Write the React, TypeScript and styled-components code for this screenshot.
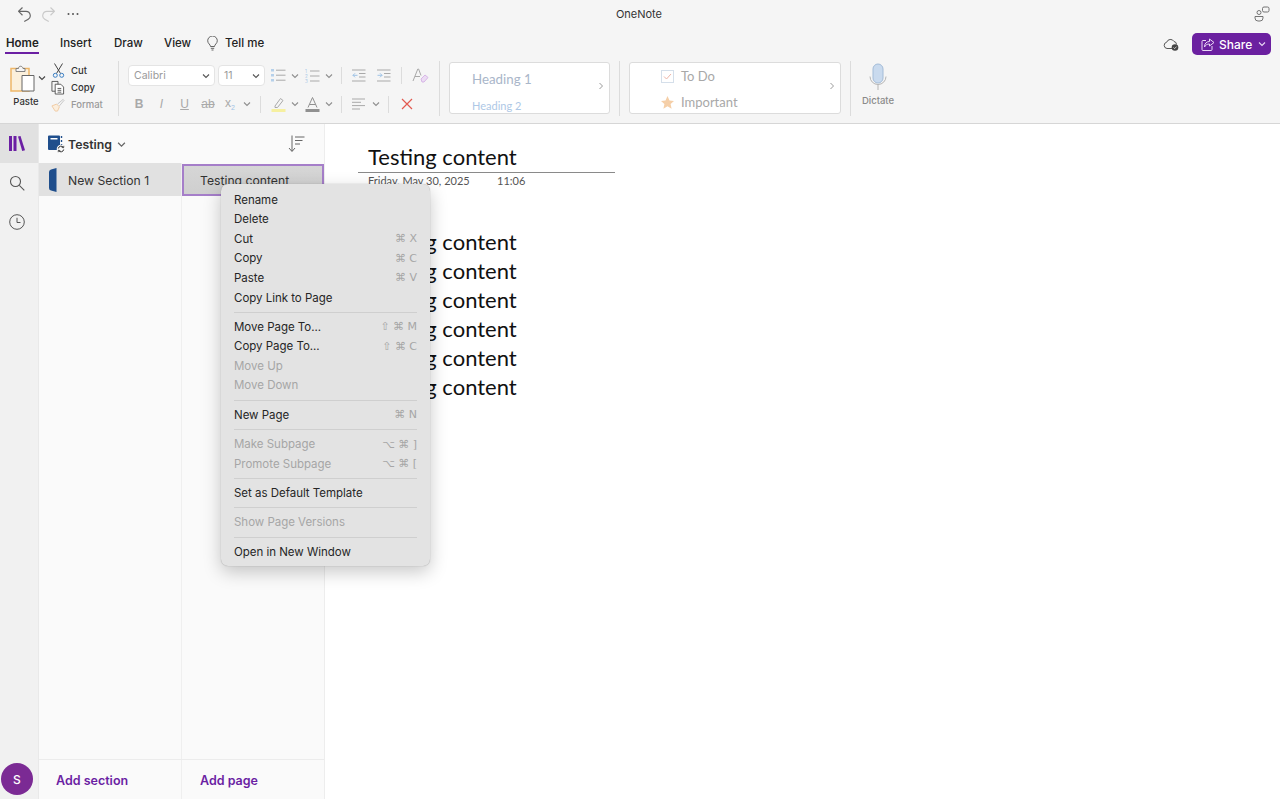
import React from "react";
import styled, { createGlobalStyle } from "styled-components";

const Global = createGlobalStyle`
  html, body { margin: 0; padding: 0; height: 100%; overflow: hidden; }
  #root { height: 100%; }
  * { box-sizing: border-box; }
  body { font-family: Inter, "Liberation Sans", sans-serif; color: #222; background: #fff; -webkit-font-smoothing: antialiased; }
`;

const Page = styled.div`position: relative; width: 1280px; height: 799px; display: flex; flex-direction: column; overflow: hidden;`;
const Header = styled.header`height: 124px; flex: none; background: #f5f5f5; border-bottom: 1px solid #d6d6d6; display: flex; flex-direction: column;`;
const TitleBar = styled.div`height: 30px; flex: none; display: flex; align-items: center; padding: 0 10px 2px 18px; position: relative;`;
const QuickIcons = styled.div`display: flex; align-items: center; gap: 11px; flex: 1;`;
const AppName = styled.div`font-size: 11px; color: #333; flex: none; margin-right: 592px;`;
const TabBar = styled.nav`height: 25px; flex: none; display: flex; align-items: center; padding: 1px 9px 0 6px;`;
const Tab = styled.div<{ $active?: boolean; $w: number }>`
  width: ${p => p.$w}px; height: 25px; font-size: 11.5px; line-height: 25px; font-weight: 500; color: #222; position: relative; white-space: nowrap;
  ${p => p.$active ? `font-weight: 600; line-height: 24px; &::after { content: ""; position: absolute; left: -1px; top: 21px; width: 34px; height: 2px; background: #6b1fa3; }` : ""}
`;
const TellMe = styled.div`display: flex; align-items: center; gap: 6px; font-size: 11.5px; font-weight: 500; flex: 1; height: 25px;`;
const CloudSlot = styled.div`display: flex; margin-right: 13px; margin-top: 3px;`;
const ShareButton = styled.div`
  width: 79px; height: 22px; background: #6b20a0; color: #fff; border-radius: 5px; display: flex; align-items: center; gap: 4px;
  padding-left: 9px; font-size: 12px; font-weight: 500; margin-top: 2px;
`;
const Ribbon = styled.div`flex: 1; display: flex; align-items: flex-start; padding: 6px 0 0 5px;`;
const VSep = styled.div<{ $h?: number; $ml?: number; $mr?: number }>`
  width: 1px; height: ${p => p.$h ?? 55}px; background: #dcdcdc; flex: none; margin: 0 ${p => p.$mr ?? 9}px 0 ${p => p.$ml ?? 9}px;
`;
const PasteGroup = styled.div`display: flex; width: 104px; height: 55px; flex: none;`;
const PasteCol = styled.div`width: 36px; display: flex; flex-direction: column; align-items: center; padding-top: 4px; flex: none; position: relative;`;
const PasteLabel = styled.div`font-size: 9.5px; font-weight: 500; color: #333; margin-top: 3px; margin-left: 6px;`;
const ClipList = styled.div`display: flex; flex-direction: column; padding-top: 1px; margin-left: 10px;`;
const ClipRow = styled.div<{ $dim?: boolean }>`
  display: flex; align-items: center; gap: 6px; height: 17px; font-size: 9.5px; font-weight: 500; color: ${p => p.$dim ? "#9a9a9a" : "#333"};
`;
const ClipIcon = styled.span`width: 14px; display: flex; justify-content: center;`;
const FontGroup = styled.div`display: flex; flex-direction: column; width: 311px; flex: none;`;
const ToolRow = styled.div<{ $h: number }>`display: flex; align-items: center; height: ${p => p.$h}px;`;
const SelectBox = styled.div<{ $w: number }>`
  width: ${p => p.$w}px; height: 21px; background: #fff; border: 1px solid #e4e4e4; border-radius: 4px; margin-right: 3px; flex: none;
  display: flex; align-items: center; justify-content: space-between; padding: 0 4px 0 5px; font-size: 10.5px; color: #9a9a9a;
`;
const Tool = styled.div<{ $w: number }>`width: ${p => p.$w}px; height: 22px; flex: none; display: flex; align-items: center; justify-content: center;`;
const StyleSep = styled.div`width: 1px; height: 55px; background: #dcdcdc; flex: none;`;
const StyleBox = styled.div<{ $w: number }>`
  width: ${p => p.$w}px; height: 52px; margin: 1px 9px 0; flex: none; background: #fff; border: 1px solid #dcdcdc; border-radius: 3px; position: relative; overflow: hidden;
  font-family: Lato, "Open Sans", sans-serif;
`;
const Caret = styled.span`position: absolute; right: 5px; top: 19px; display: flex;`;
const Heading = styled.div<{ $size: number; $color: string; $top: number }>`
  position: absolute; left: 22px; top: ${p => p.$top}px; font-size: ${p => p.$size}px; color: ${p => p.$color}; line-height: 1;
`;
const TagRow = styled.div<{ $top: number }>`
  position: absolute; left: 31px; top: ${p => p.$top}px; display: flex; align-items: center; gap: 7px; font-size: 13px; color: #a8a8a8; line-height: 16px;
`;
const DictateBlock = styled.div`width: 54px; display: flex; flex-direction: column; align-items: center; padding-top: 2px; font-size: 9.5px; color: #8a8a8a; font-weight: 500; gap: 4px;`;
const Body = styled.main`flex: 1; display: flex; min-height: 0;`;
const Rail = styled.aside`width: 39px; flex: none; background: #f1f1f1; border-right: 1px solid #e9e9e9; display: flex; flex-direction: column; align-items: center; position: relative;`;
const RailItem = styled.div<{ $active?: boolean }>`
  width: 38px; height: 39px; padding-right: 4px; display: flex; align-items: center; justify-content: center; background: ${p => p.$active ? "#e1e1e1" : "transparent"};
`;
const Avatar = styled.div`
  position: absolute; left: 1px; bottom: 4px; width: 32px; height: 32px; border-radius: 50%; background: #7b2a94; color: #fff; display: flex; align-items: center; justify-content: center; font-size: 12px; font-weight: 500;
`;
const Panels = styled.div`width: 286px; flex: none; background: #fafafa; border-right: 1px solid #ededed; display: flex; flex-direction: column;`;
const NotebookBar = styled.div`height: 39px; flex: none; display: flex; align-items: center; padding: 1px 19px 0 8px; font-size: 12.3px; font-weight: 600; color: #333;`;
const NotebookName = styled.span`margin: 0 5px 0 2px;`;
const Grow = styled.div`flex: 1;`;
const Columns = styled.div`flex: 1; display: flex; min-height: 0;`;
const Column = styled.div<{ $w: number; $line?: boolean }>`width: ${p => p.$w}px; flex: none; ${p => p.$line ? "border-right: 1px solid #efefef;" : ""}`;
const SectionRow = styled.div`height: 33px; background: #e1e1e1; display: flex; align-items: center; padding: 1px 0 0 10px; gap: 11px; font-size: 12.2px; color: #333;`;
const PageRow = styled.div`height: 32px; border: 2px solid #a57ec9; display: flex; align-items: center; padding-left: 16px; font-size: 12.2px; color: #333; margin-top: 1px; background: linear-gradient(#d6d6d6, #cfcfcf);`;
const FooterRow = styled.div`height: 40px; flex: none; display: flex; border-top: 1px solid #ececec;`;
const AddLink = styled.div<{ $w: number; $line?: boolean; $pl: number }>`
  width: ${p => p.$w}px; padding: 1px 0 0 ${p => p.$pl}px; font-size: 12.5px; font-weight: 600; color: #6b1fa3; display: flex; align-items: center; ${p => p.$line ? "border-right: 1px solid #efefef;" : ""}
`;
const Canvas = styled.section`flex: 1; background: #fff; padding: 19px 0 0 33px; font-family: Lato, "Open Sans", sans-serif; color: #111;`;
const TitleBlock = styled.div`width: 257px; height: 30px; padding-left: 10px; border-bottom: 1px solid #8a8a8a; font-size: 22px; line-height: 28px;`;
const Meta = styled.div`display: flex; padding: 1px 0 0 10px; font-size: 11px; line-height: 14px; color: #555;`;
const MetaDate = styled.span`width: 129px;`;
const NoteLines = styled.div`margin-top: 39px; padding-left: 10px;`;
const NoteLine = styled.div`font-size: 22px; line-height: 29px; height: 29px;`;
const Menu = styled.div`
  position: absolute; left: 221px; top: 184px; width: 209px; height: 382px; background: #e3e3e3; border-radius: 7px; padding: 6px 13px 0;
  box-shadow: 0 0 1px rgba(0,0,0,.35), 0 6px 18px rgba(0,0,0,.22); z-index: 5;
`;
const MenuItem = styled.div<{ $off?: boolean }>`
  height: 19.55px; display: flex; justify-content: space-between; align-items: center; font-size: 11.5px; letter-spacing: -0.02px; white-space: nowrap;
  color: ${p => p.$off ? "#a6a6a6" : "#262626"};
`;
const Keys = styled.span`color: #a6a6a6; font-size: 11px; font-family: "DejaVu Sans", sans-serif;`;
const MenuSep = styled.div`height: 1px; background: #cfcfcf; margin: 4.4px 0;`;

const Chev = ({ c = "#8f8f8f", s = 8 }: { c?: string; s?: number }) => (
  <svg width={s} height={s} viewBox="0 0 8 8" fill="none"><path d="M1 2.5 4 5.5 7 2.5" stroke={c} strokeWidth="1.1" /></svg>
);
const Line = "#a9a9a9";

const UndoIcon = ({ c }: { c: string }) => (
  <svg width="13" height="15" viewBox="1.500 1 12.500 14.500" fill="none" stroke={c} strokeWidth="1.100"><path d="M5.800 1.500 2 5.200 5.800 9M2 5.200h7.300a4.200 4.200 0 0 1 1.600 8L7.500 15" /></svg>
);
const RedoIcon = ({ c }: { c: string }) => (
  <svg width="13" height="15" viewBox="2 1 12.500 14.500" fill="none" stroke={c} strokeWidth="1.100"><path d="M10.200 1.500 14 5.200 10.200 9M14 5.200H6.700a4.200 4.200 0 0 0-1.600 8L8.500 15" /></svg>
);
const BulletsIcon = () => (
  <svg width="15" height="13" viewBox="0 0 15 13"><g fill="#b5d0ea"><rect y="0" width="3" height="2.5"/><rect y="5" width="3" height="2.5"/><rect y="10" width="3" height="2.5"/></g><path d="M5 1.2h9.5M5 6.2h9.5M5 11.2h9.5" stroke={Line} /></svg>
);
const NumbersIcon = () => (
  <svg width="15" height="14" viewBox="0 0 15 14"><text x="0" y="4" fontSize="4.5" fill="#a9c8e6" fontFamily="Inter">1</text><text x="0" y="9" fontSize="4.5" fill="#a9c8e6" fontFamily="Inter">2</text><text x="0" y="14" fontSize="4.5" fill="#a9c8e6" fontFamily="Inter">3</text><path d="M5 2h9.5M5 7h9.5M5 12h9.5" stroke={Line} /></svg>
);
const OutdentIcon = () => (
  <svg width="14" height="13" viewBox="0 0 14 13" fill="none"><path d="M0 1h13.5M7 4.5h6.5M7 8h6.5M0 12h13.5" stroke={Line} /><path d="M5.5 6.3H.8M3 4.3l-2 2 2 2" stroke="#9fc3e6" /></svg>
);
const IndentIcon = () => (
  <svg width="14" height="13" viewBox="0 0 14 13" fill="none"><path d="M0 1h13.5M7 4.5h6.5M7 8h6.5M0 12h13.5" stroke={Line} /><path d="M.5 6.3h4.7M3 4.3l2 2-2 2" stroke="#9fc3e6" /></svg>
);
const ClearFmtIcon = () => (
  <svg width="17" height="16" viewBox="0 0 17 16" fill="none"><path d="M1 13 5.8 1h.8L9 7.5M3 8.5h5" stroke="#a9a9a9" /><path d="m9 11 4-4 3 2.500-4 4.500H10z" stroke="#d7b6e6" fill="#ecdcf4" /></svg>
);
const HighlightIcon = () => (
  <svg width="15" height="15" viewBox="0 0 15 15" fill="none"><path d="m4 9 5.500-7.500 2.500 2L6.500 10.500H4z" stroke="#a9a9a9" /><rect x="0.500" y="12" width="14" height="3" fill="#f6f0a0" /></svg>
);
const FontColorIcon = () => (
  <svg width="15" height="15" viewBox="0 0 15 15" fill="none"><path d="M3 10.500 7.500 0.500 12 10.500M4.500 7.500h6" stroke="#8f8f8f" /><rect x="0.500" y="12" width="14" height="3" fill="#909090" /></svg>
);
const AlignIcon = () => (
  <svg width="14" height="12" viewBox="0 0 14 12" fill="none"><path d="M0 1h13M0 4.300h9M0 7.600h13M0 11h8" stroke={Line} /></svg>
);

const PasteIcon = () => (
  <svg width="26" height="28" viewBox="0 0 26 28" fill="none">
    <path d="M1 3.500h18v22.500H1z" fill="#fbf0dc" stroke="#eeb668" strokeWidth="1.500" />
    <path d="M6 3.500h2.500c0-3 4-3 4.500 0H15v3H6z" fill="#f5f5f5" stroke="#777" strokeWidth="0.900" />
    <path d="M12 10.500h12v15.500H12z" fill="#fff" stroke="#666" />
  </svg>
);
const ScissorsIcon = () => (
  <svg width="13" height="15" viewBox="0 0 13 15" fill="none"><path d="M2.500 0.500 8.500 10.500M10.500 0.500 4.500 10.500" stroke="#444" /><circle cx="3.300" cy="12.300" r="2" stroke="#3a7fc4" /><circle cx="9.700" cy="12.300" r="2" stroke="#3a7fc4" /></svg>
);
const CopyIcon = () => (
  <svg width="15" height="15" viewBox="0 0 15 15" fill="none" stroke="#444" strokeWidth="0.900"><path d="M1 1h6.500v10.500H1z" fill="#f5f5f5" /><path d="M4.500 4h6l3 3v7.500h-9z" fill="#fff" /><path d="M7 8.500h4M7 10.500h4M7 12.500h4" /></svg>
);
const BrushIcon = () => (
  <svg width="15" height="14" viewBox="0 0 15 14" fill="none"><path d="m1 8 5-2 3 3-2 4.500H4.500L1 8Z" stroke="#f0c9a0" fill="#fbeedd" /><path d="m7 6 6-5 1 1-5 6" stroke="#c5c5c5" /></svg>
);
const NotebookIcon = () => (
  <svg width="19" height="18" viewBox="0 0 19 18" fill="none">
    <path d="M1 1.500a1 1 0 0 1 1-1h10a1 1 0 0 1 1 1v13.500H2a1 1 0 0 1-1-1z" fill="#1f4e8c" />
    <rect x="3.500" y="3" width="7" height="1.500" fill="#fff" />
    <path d="M14.500 1v2M14.500 5v2M14.500 9v2" stroke="#1f4e8c" strokeWidth="1.400" />
    <circle cx="14" cy="14" r="4.300" fill="#fafafa" />
    <path d="M11.300 13.500a2.800 2.800 0 0 1 5-1.200M16.700 14.500a2.800 2.800 0 0 1-5 1.200" stroke="#333" strokeWidth="1" />
    <path d="m16.800 10.800-.2 2-1.900-.4M11.200 17.200l.2-2 1.900.4" stroke="#333" strokeWidth="0.800" />
  </svg>
);

const menu: (null | { t: string; k?: string; off?: boolean })[] = [
  { t: "Rename" }, { t: "Delete" }, { t: "Cut", k: "⌘ X" }, { t: "Copy", k: "⌘ C" }, { t: "Paste", k: "⌘ V" }, { t: "Copy Link to Page" }, null,
  { t: "Move Page To...", k: "⇧ ⌘ M" }, { t: "Copy Page To...", k: "⇧ ⌘ C" }, { t: "Move Up", off: true }, { t: "Move Down", off: true }, null,
  { t: "New Page", k: "⌘ N" }, null,
  { t: "Make Subpage", k: "⌥ ⌘ ]", off: true }, { t: "Promote Subpage", k: "⌥ ⌘ [", off: true }, null,
  { t: "Set as Default Template" }, null,
  { t: "Show Page Versions", off: true }, null,
  { t: "Open in New Window" },
];

const ToolGlyph = styled.span<{ $b?: boolean; $i?: boolean; $u?: boolean; $s?: boolean }>`
  font-size: 12px; color: #a9a9a9; font-family: "Liberation Sans", sans-serif;
  font-weight: ${p => p.$b ? 700 : 400}; font-style: ${p => p.$i ? "italic" : "normal"};
  text-decoration: ${p => p.$u ? "underline" : p.$s ? "line-through" : "none"};
`;
const Sub = styled.sub`font-size: 7px; color: #9fc3e6;`;
const PasteCaret = styled.span`position: absolute; left: 33px; top: 13px; display: flex;`;
const ShareCaret = styled.span`display: flex; margin-left: 2px;`;
const Dots = styled.svg`margin-left: 1px;`;

export default function App() {
  return (
    <Page>
      <Global />
      <Header>
        <TitleBar>
          <QuickIcons>
            <UndoIcon c="#666" />
            <RedoIcon c="#c9c9c9" />
            <Dots width="12" height="4" viewBox="0 0 12 4" fill="#555"><circle cx="1.500" cy="2" r="1" /><circle cx="6" cy="2" r="1" /><circle cx="10.500" cy="2" r="1" /></Dots>
          </QuickIcons>
          <AppName>OneNote</AppName>
          <svg width="16" height="16" viewBox="0 0 16 16" fill="none" stroke="#666" strokeWidth="0.900"><rect x="8.500" y="1" width="6.500" height="5" rx="1.500" /><circle cx="5" cy="6.500" r="2" /><path d="M1 10.500h8v1.500a3 3 0 0 1-3 3H4a3 3 0 0 1-3-3z" /></svg>
        </TitleBar>
        <TabBar>
          <Tab $active $w={54}>Home</Tab>
          <Tab $w={54}>Insert</Tab>
          <Tab $w={50}>Draw</Tab>
          <Tab $w={42}>View</Tab>
          <TellMe>
            <svg width="13" height="15" viewBox="0 0 13 15" fill="none" stroke="#555" strokeWidth="0.900"><path d="M4.500 10.500c0-2-2.800-3-2.800-5.700a4.800 4.800 0 0 1 9.600 0c0 2.700-2.800 3.700-2.800 5.700z" /><path d="M4.800 12.300h3.400M5.500 14h2" /></svg>
            Tell me
          </TellMe>
          <CloudSlot>
            <svg width="16" height="13" viewBox="0 0 16 13" fill="none"><path d="M4 10.500a3.200 3.200 0 0 1-.3-6.300A4 4 0 0 1 11 3.500a3 3 0 0 1 2.500 3" stroke="#444" strokeWidth="0.900" /><path d="M4 10.500h5" stroke="#444" strokeWidth="0.900" /><circle cx="12" cy="9.500" r="3.300" fill="#444" /><path d="m10.500 9.500 1.200 1.100 1.800-2" stroke="#fff" strokeWidth="0.700" /></svg>
          </CloudSlot>
          <ShareButton>
            <svg width="14" height="13" viewBox="0 0 14 13" fill="none" stroke="#e9d8f5" strokeWidth="1"><path d="M5 2.500H2a1 1 0 0 0-1 1v8a1 1 0 0 0 1 1h8a1 1 0 0 0 1-1V8" /><path d="M8.500 1 13 4.500 8.500 8V6C6 6 4.500 7 3.500 9c0-3.500 2-5.500 5-5.500z" /></svg>
            Share
            <ShareCaret><Chev c="#e9d8f5" /></ShareCaret>
          </ShareButton>
        </TabBar>
        <Ribbon>
          <PasteGroup>
            <PasteCol>
              <PasteIcon />
              <PasteLabel>Paste</PasteLabel>
              <PasteCaret><Chev c="#444" /></PasteCaret>
            </PasteCol>
            <ClipList>
              <ClipRow><ClipIcon><ScissorsIcon /></ClipIcon>Cut</ClipRow>
              <ClipRow><ClipIcon><CopyIcon /></ClipIcon>Copy</ClipRow>
              <ClipRow $dim><ClipIcon><BrushIcon /></ClipIcon>Format</ClipRow>
            </ClipList>
          </PasteGroup>
          <VSep />
          <FontGroup>
            <ToolRow $h={29}>
              <SelectBox $w={87}>Calibri<Chev c="#555" /></SelectBox>
              <SelectBox $w={47}>11<Chev c="#555" /></SelectBox>
              <Tool $w={20}><BulletsIcon /></Tool>
              <Tool $w={14}><Chev /></Tool>
              <Tool $w={20}><NumbersIcon /></Tool>
              <Tool $w={14}><Chev /></Tool>
              <VSep $h={17} $ml={5} $mr={5} />
              <Tool $w={24}><OutdentIcon /></Tool>
              <Tool $w={25}><IndentIcon /></Tool>
              <VSep $h={17} $ml={5} $mr={5} />
              <Tool $w={26}><ClearFmtIcon /></Tool>
            </ToolRow>
            <ToolRow $h={28}>
              <Tool $w={22}><ToolGlyph $b>B</ToolGlyph></Tool>
              <Tool $w={23}><ToolGlyph $i>I</ToolGlyph></Tool>
              <Tool $w={23}><ToolGlyph $u>U</ToolGlyph></Tool>
              <Tool $w={24}><ToolGlyph $s>ab</ToolGlyph></Tool>
              <Tool $w={20}><ToolGlyph>x<Sub>2</Sub></ToolGlyph></Tool>
              <Tool $w={14}><Chev /></Tool>
              <VSep $h={17} $ml={6} $mr={7} />
              <Tool $w={20}><HighlightIcon /></Tool>
              <Tool $w={14}><Chev /></Tool>
              <Tool $w={20}><FontColorIcon /></Tool>
              <Tool $w={14}><Chev /></Tool>
              <VSep $h={17} $ml={5} $mr={7} />
              <Tool $w={20}><AlignIcon /></Tool>
              <Tool $w={14}><Chev /></Tool>
              <VSep $h={17} $ml={5} $mr={5} />
              <Tool $w={26}><svg width="12" height="12" viewBox="0 0 12 12" stroke="#e25a50" strokeWidth="1.200"><path d="M1 1l10 10M11 1 1 11" /></svg></Tool>
            </ToolRow>
          </FontGroup>
          <StyleSep />
          <StyleBox $w={161}>
            <Heading $size={13.3} $color="#a9b6c9" $top={10}>Heading 1</Heading>
            <Heading $size={11} $color="#aec8e6" $top={37}>Heading 2</Heading>
            <Caret><svg width="6" height="8" viewBox="0 0 6 8" fill="none" stroke="#999"><path d="m1.500 1 3 3-3 3" /></svg></Caret>
          </StyleBox>
          <StyleSep />
          <StyleBox $w={212}>
            <TagRow $top={5}>
              <svg width="13" height="13" viewBox="0 0 13 13" fill="none"><rect x="0.500" y="0.500" width="12" height="12" stroke="#d5dfea" /><path d="m3 6.500 2.500 2.500 4.500-5" stroke="#eeb5a8" /></svg>
              To Do
            </TagRow>
            <TagRow $top={31}>
              <svg width="13" height="13" viewBox="0 0 13 13" fill="#f5cfa8"><path d="m6.500 0 2 4.400 4.500.5-3.400 3.100 1 4.700-4.100-2.500-4.100 2.500 1-4.700L0 4.900l4.500-.5z" /></svg>
              Important
            </TagRow>
            <Caret><svg width="6" height="8" viewBox="0 0 6 8" fill="none" stroke="#999"><path d="m1.500 1 3 3-3 3" /></svg></Caret>
          </StyleBox>
          <StyleSep />
          <DictateBlock>
            <svg width="18" height="28" viewBox="0 0 18 28" fill="none"><rect x="4" y="1" width="10" height="19" rx="5" fill="#c9daee" stroke="#a3bcd8" /><path d="M1 13.500a8 8 0 0 0 16 0M9 21.500V27" stroke="#b5b5b5" /></svg>
            Dictate
          </DictateBlock>
        </Ribbon>
      </Header>
      <Body>
        <Rail>
          <RailItem $active>
            <svg width="16" height="15" viewBox="0 0 16 15" fill="#6b1fa3"><rect x="0" y="0" width="3" height="15" /><rect x="4.500" y="0" width="3" height="15" /><path d="M9 0.500 11.500 0 16 14.300l-2.800.7z" /></svg>
          </RailItem>
          <RailItem>
            <svg width="16" height="16" viewBox="0 0 16 16" fill="none" stroke="#555" strokeWidth="1.100"><circle cx="6.500" cy="6.500" r="5" /><path d="m10.300 10.300 5 5" /></svg>
          </RailItem>
          <RailItem>
            <svg width="16" height="16" viewBox="0 0 16 16" fill="none" stroke="#555" strokeWidth="1"><circle cx="8" cy="8" r="7.300" /><path d="M8 3.800V8.500H11.500" /></svg>
          </RailItem>
          <Avatar>S</Avatar>
        </Rail>
        <Panels>
          <NotebookBar>
            <NotebookIcon />
            <NotebookName>Testing</NotebookName>
            <Chev c="#666" s={9} />
            <Grow />
            <svg width="17" height="18" viewBox="0 0 17 18" fill="none" stroke="#555" strokeWidth="0.900"><path d="M4 0.500V16M1 13l3 3.500L7 13M7 2h9.500M7 5.500h7.500M7 9h5" /></svg>
          </NotebookBar>
          <Columns>
            <Column $w={143} $line>
              <SectionRow>
                <svg width="8" height="24" viewBox="0 0 8 24" fill="#1f4e8c"><path d="M7.500 0v24L2 22.500Q0 22 0 20V4q0-2 2-2.500z" /></svg>
                New Section 1
              </SectionRow>
            </Column>
            <Column $w={142}>
              <PageRow>Testing content</PageRow>
            </Column>
          </Columns>
          <FooterRow>
            <AddLink $w={143} $pl={17} $line>Add section</AddLink>
            <AddLink $w={142} $pl={18}>Add page</AddLink>
          </FooterRow>
        </Panels>
        <Canvas>
          <TitleBlock>Testing content</TitleBlock>
          <Meta><MetaDate>Friday, May 30, 2025</MetaDate>11:06</Meta>
          <NoteLines>
            {Array.from({ length: 6 }, (_, i) => <NoteLine key={i}>Testing content</NoteLine>)}
          </NoteLines>
        </Canvas>
      </Body>
      <Menu>
        {menu.map((m, i) => m === null ? <MenuSep key={i} /> : (
          <MenuItem key={i} $off={m.off}>{m.t}{m.k && <Keys>{m.k}</Keys>}</MenuItem>
        ))}
      </Menu>
    </Page>
  );
}
